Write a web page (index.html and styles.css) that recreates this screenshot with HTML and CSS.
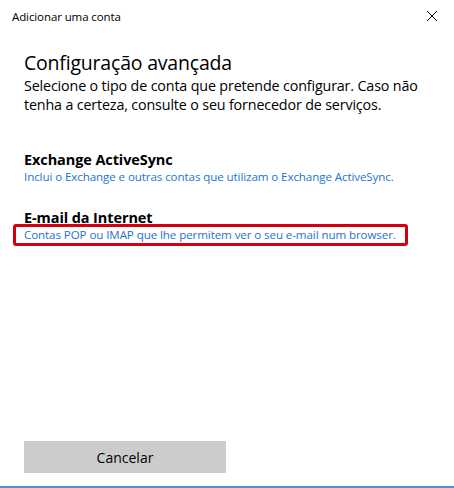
FILE: index.html
```html
<!DOCTYPE html>
<html lang="pt">
<head>
<meta charset="utf-8">
<link rel="stylesheet" href="styles.css">
</head>
<body>
<div class="window">
  <div class="titlebar">
    <span class="title">Adicionar uma conta</span>
    <svg class="close" width="12" height="12" viewBox="0 0 12 12"><path d="M1 1L11 11M11 1L1 11" stroke="#000" stroke-width="1" fill="none"/></svg>
  </div>
  <div class="content">
    <h1 class="heading">Configuração avançada</h1>
    <p class="intro">Selecione o tipo de conta que pretende configurar. Caso não tenha a certeza, consulte o seu fornecedor de serviços.</p>
    <div class="option first">
      <div class="opt-title">Exchange ActiveSync</div>
      <div class="opt-desc">Inclui o Exchange e outras contas que utilizam o Exchange ActiveSync.</div>
    </div>
    <div class="option">
      <div class="opt-title">E-mail da Internet</div>
      <div class="opt-desc highlighted">Contas POP ou IMAP que lhe permitem ver o seu e-mail num browser.</div>
    </div>
  </div>
  <div class="footer">
    <button class="cancel">Cancelar</button>
  </div>
</div>
</body>
</html>
```
FILE: styles.css
```css
html, body {
  margin: 0;
  padding: 0;
  background: #fff;
}
body {
  font-family: "Open Sans", "Noto Sans", sans-serif;
  color: #000;
}
.window {
  width: 454px;
  height: 488px;
  display: flex;
  flex-direction: column;
  box-sizing: border-box;
  border-bottom: 2px solid #4a90d9;
}
.titlebar {
  height: 32px;
  display: flex;
  align-items: center;
  justify-content: space-between;
  padding: 0 16px 0 12px;
}
.title {
  font-size: 11.5px;
  letter-spacing: -0.1px;
}
.close {
  display: block;
}
.content {
  flex: 1;
  padding: 18px 0 0 24px;
}
.heading {
  margin: 0;
  font-weight: 400;
  font-size: 19.5px;
  line-height: 26px;
  letter-spacing: -0.2px;
}
.intro {
  margin: 0;
  font-size: 14.3px;
  line-height: 19px;
  letter-spacing: -0.15px;
}
.option {
  margin-top: 24px;
}
.option.first {
  margin-top: 37px;
}
.opt-title {
  font-weight: 700;
  font-size: 14.5px;
  line-height: 18px;
  letter-spacing: -0.1px;
}
.opt-desc {
  font-size: 11.6px;
  line-height: 16px;
  color: #1e73d2;
  letter-spacing: -0.1px;
}
.highlighted {
  position: relative;
}
.highlighted::after {
  content: "";
  position: absolute;
  left: -11px;
  width: 395px;
  top: -3px;
  height: 22px;
  box-sizing: border-box;
  border: 3px solid #d40010;
  border-radius: 3px;
}
.footer {
  padding: 0 0 13px 24px;
}
.cancel {
  width: 202px;
  height: 32px;
  border: none;
  background: #cccccc;
  font-family: "Open Sans", "Noto Sans", sans-serif;
  font-size: 14px;
  color: #000;
  padding: 0;
}
```
